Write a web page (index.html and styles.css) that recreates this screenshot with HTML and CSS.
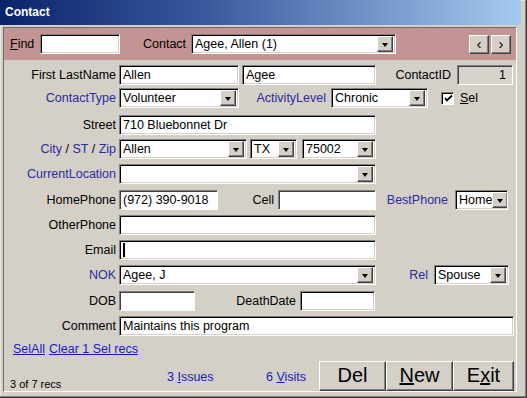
FILE: index.html
```html
<!DOCTYPE html>
<html>
<head>
<meta charset="utf-8">
<link rel="stylesheet" href="styles.css">
</head>
<body>
<div class="window">
  <div class="titlebar">Contact</div>
  <div class="frame">
    <div class="form">
      <div class="header">
        <span class="hlabel find"><u>F</u>ind</span>
        <div class="tb find-box"></div>
        <span class="hlabel contact">Contact</span>
        <div class="tb combo contact-box"><span class="val">Agee, Allen (1)</span><span class="ddbtn"><i></i></span></div>
        <div class="navbtn prev">&lsaquo;</div>
        <div class="navbtn next">&rsaquo;</div>
      </div>
      <div class="body">
        <div class="row r1">
          <span class="label">First LastName</span>
          <div class="tb w-first"><span class="val">Allen</span></div>
          <div class="tb w-last"><span class="val">Agee</span></div>
          <span class="rlabel l-cid">ContactID</span>
          <div class="tb idbox"><span class="val">1</span></div>
        </div>
        <div class="row r2">
          <span class="label blue">ContactType</span>
          <div class="tb combo w-first"><span class="val">Volunteer</span><span class="ddbtn"><i></i></span></div>
          <span class="rlabel blue l-act">ActivityLevel</span>
          <div class="tb combo w-act"><span class="val">Chronic</span><span class="ddbtn"><i></i></span></div>
          <span class="chk"><svg width="9" height="9" viewBox="0 0 9 9"><path d="M1 4 L3 6.5 L8 1.5" fill="none" stroke="#000" stroke-width="1.8"/></svg></span>
          <span class="sel"><u>S</u>el</span>
        </div>
        <div class="row r3">
          <span class="label">Street</span>
          <div class="tb w-full"><span class="val">710 Bluebonnet Dr</span></div>
        </div>
        <div class="row r4">
          <span class="label"><span class="blue">City</span> / <span class="blue">ST</span> / <span class="blue">Zip</span></span>
          <div class="tb combo w-city"><span class="val">Allen</span><span class="ddbtn"><i></i></span></div>
          <div class="tb combo w-st"><span class="val">TX</span><span class="ddbtn"><i></i></span></div>
          <div class="tb combo w-zip"><span class="val">75002</span><span class="ddbtn"><i></i></span></div>
        </div>
        <div class="row r5">
          <span class="label blue">CurrentLocation</span>
          <div class="tb combo w-full"><span class="val"></span><span class="ddbtn"><i></i></span></div>
        </div>
        <div class="row r6">
          <span class="label">HomePhone</span>
          <div class="tb thin w-home"><span class="val">(972) 390-9018</span></div>
          <span class="rlabel l-cell">Cell</span>
          <div class="tb thin w-cell"></div>
          <span class="rlabel blue l-best">BestPhone</span>
          <div class="tb combo w-best"><span class="val">Home</span><span class="ddbtn"><i></i></span></div>
        </div>
        <div class="row r7">
          <span class="label">OtherPhone</span>
          <div class="tb w-full"></div>
        </div>
        <div class="row r8">
          <span class="label">Email</span>
          <div class="tb w-full"><span class="caret"></span></div>
        </div>
        <div class="row r9">
          <span class="label blue">NOK</span>
          <div class="tb combo w-full"><span class="val">Agee, J</span><span class="ddbtn"><i></i></span></div>
          <span class="rlabel blue l-rel">Rel</span>
          <div class="tb combo w-rel"><span class="val">Spouse</span><span class="ddbtn"><i></i></span></div>
        </div>
        <div class="row r10">
          <span class="label">DOB</span>
          <div class="tb thin w-dob"></div>
          <span class="rlabel l-death">DeathDate</span>
          <div class="tb w-death"></div>
        </div>
        <div class="row r11">
          <span class="label">Comment</span>
          <div class="tb w-comment"><span class="val">Maintains this program</span></div>
        </div>
        <div class="links">
          <span class="link">SelAll</span>
          <span class="link">Clear 1 Sel recs</span>
        </div>
        <div class="footer">
          <span class="recs">3 of 7 recs</span>
          <span class="flink issues">3 <u>I</u>ssues</span>
          <span class="flink visits">6 <u>V</u>isits</span>
          <div class="buttons">
            <div class="btn b-del">Del</div>
            <div class="btn b-new"><u>N</u>ew</div>
            <div class="btn b-exit">E<u>x</u>it</div>
          </div>
        </div>
      </div>
    </div>
  </div>
</div>
</body>
</html>
```
FILE: styles.css
```css
* { box-sizing: border-box; }
html, body { margin: 0; padding: 0; }
body {
  width: 527px;
  height: 398px;
  overflow: hidden;
  font-family: "Liberation Sans", Arial, sans-serif;
  font-size: 12.5px;
  color: #000;
}
.window {
  width: 527px;
  height: 398px;
  background: #d4d0c8;
  display: flex;
  flex-direction: column;
  box-shadow: inset -1px -1px 0 #404040, inset -2px -2px 0 #808080, inset 1px 1px 0 #e8e6e0;
}
.titlebar {
  height: 25px;
  margin-right: 6px;
  background: linear-gradient(to right, #0a246a 0%, #3a5a9e 40%, #a6caf0 100%);
  color: #fff;
  font-weight: bold;
  font-size: 12px;
  line-height: 25px;
  padding-left: 5px;
}
.frame {
  flex: 1;
  padding: 2px 10px 6px 3px;
  display: flex;
}
.form {
  flex: 1;
  border: 1px solid;
  border-color: #6e6c68 #ffffff #ffffff #6e6c68;
  display: flex;
  flex-direction: column;
}
.header {
  height: 32px;
  background: #c49494;
  display: flex;
  align-items: center;
}
.hlabel.find { margin-left: 6px; width: 30px; }
.find-box { width: 80px; height: 20px; }
.hlabel.contact { margin-left: 23px; width: 48px; }
.contact-box { width: 205px; height: 20px; }
.navbtn {
  width: 20px;
  height: 19px;
  background: #d4d0c8;
  border: 1px solid;
  border-color: #ffffff #404040 #404040 #ffffff;
  box-shadow: inset -1px -1px 0 #808080;
  text-align: center;
  font-size: 15px;
  line-height: 15px;
}
.navbtn.prev { margin-left: 73px; }
.navbtn.next { margin-left: 2px; }

.body {
  flex: 1;
  padding-top: 5px;
  display: flex;
  flex-direction: column;
}
.row {
  display: flex;
  align-items: center;
  height: 20px;
}
.r2 { margin-top: 3px; }
.r3 { margin-top: 7px; }
.r4 { margin-top: 4px; }
.r5 { margin-top: 5px; }
.r6 { margin-top: 6px; }
.r7 { margin-top: 5px; }
.r8 { margin-top: 5px; }
.r9 { margin-top: 5px; }
.r10 { margin-top: 6px; }
.r11 { margin-top: 5px; }

.label {
  width: 112px;
  text-align: right;
  margin-right: 3px;
  white-space: nowrap;
}
.rlabel { text-align: right; white-space: nowrap; }
.blue { color: #2b2b9e; }

.tb {
  position: relative;
  height: 20px;
  background: #fff;
  border: 1px solid;
  border-color: #808080 #ffffff #ffffff #808080;
  box-shadow: inset 1px 1px 0 #000, inset -1px -1px 0 #d4d0c8;
  display: flex;
  align-items: center;
  padding-left: 3px;
  white-space: nowrap;
  overflow: hidden;
}
.tb.thin {
  box-shadow: inset 1px 1px 0 #404040;
}
.tb .val { flex: 1; }
.combo { padding-right: 2px; }
.ddbtn {
  width: 16px;
  height: 16px;
  background: #d4d0c8;
  border: 1px solid;
  border-color: #ffffff #404040 #404040 #ffffff;
  box-shadow: inset -1px -1px 0 #808080;
  display: flex;
  align-items: center;
  justify-content: center;
  flex: none;
}
.ddbtn i {
  width: 0;
  height: 0;
  border-left: 3.5px solid transparent;
  border-right: 3.5px solid transparent;
  border-top: 4px solid #000;
  margin-top: 1px;
}

.w-first { width: 120px; }
.w-last { width: 134px; margin-left: 3px; }
.l-cid { width: 75px; }
.idbox {
  width: 56px;
  margin-left: 6px;
  background: #d6d3cc;
  box-shadow: inset 1px 1px 0 #404040;
  text-align: right;
  padding-right: 6px;
}
.idbox .val { text-align: right; }
.l-act { width: 87px; }
.w-act { width: 97px; margin-left: 5px; }
.chk {
  width: 13px;
  height: 13px;
  margin-left: 13px;
  background: #fff;
  border: 1px solid;
  border-color: #808080 #ffffff #ffffff #808080;
  box-shadow: inset 1px 1px 0 #000;
  display: flex;
  align-items: center;
  justify-content: center;
  padding: 1px 0 0 1px;
}
.chk svg { display: block; }
.sel { margin-left: 6px; }
.w-full { width: 257px; }
.w-city { width: 128px; }
.w-st { width: 47px; margin-left: 3px; }
.w-zip { width: 74px; margin-left: 5px; }
.w-home { width: 99px; }
.l-cell { width: 56px; }
.w-cell { width: 98px; margin-left: 4px; }
.l-best { width: 72px; }
.w-best { width: 53px; margin-left: 7px; }
.caret {
  width: 2px;
  height: 14px;
  background: #000;
}
.l-rel { width: 52px; }
.w-rel { width: 75px; margin-left: 6px; }
.w-dob { width: 76px; }
.l-death { width: 101px; }
.w-death { width: 75px; margin-left: 4px; }
.w-comment { width: 395px; }

.links {
  margin-top: 6px;
  height: 14px;
  display: flex;
  align-items: center;
  padding-left: 9px;
  gap: 4px;
}
.link {
  color: #1818c8;
  text-decoration: underline;
}
.footer {
  margin-top: 5px;
  display: flex;
  align-items: center;
  height: 30px;
}
.recs {
  font-size: 11px;
  margin-left: 6px;
  width: 157px;
  align-self: flex-end;
  margin-bottom: 1px;
}
.flink { color: #1818c8; }
.issues { width: 99px; margin-top: 2px; }
.visits { width: 53px; margin-top: 2px; }
.buttons { display: flex; }
.btn {
  height: 30px;
  background: #d4d0c8;
  border: 1px solid;
  border-color: #ffffff #404040 #404040 #ffffff;
  box-shadow: inset -1px -1px 0 #808080;
  font-size: 20px;
  display: flex;
  align-items: center;
  justify-content: center;
  padding-bottom: 1px;
}
.b-del { width: 67px; }
.b-new { width: 67px; }
.b-exit { width: 61px; }
```
